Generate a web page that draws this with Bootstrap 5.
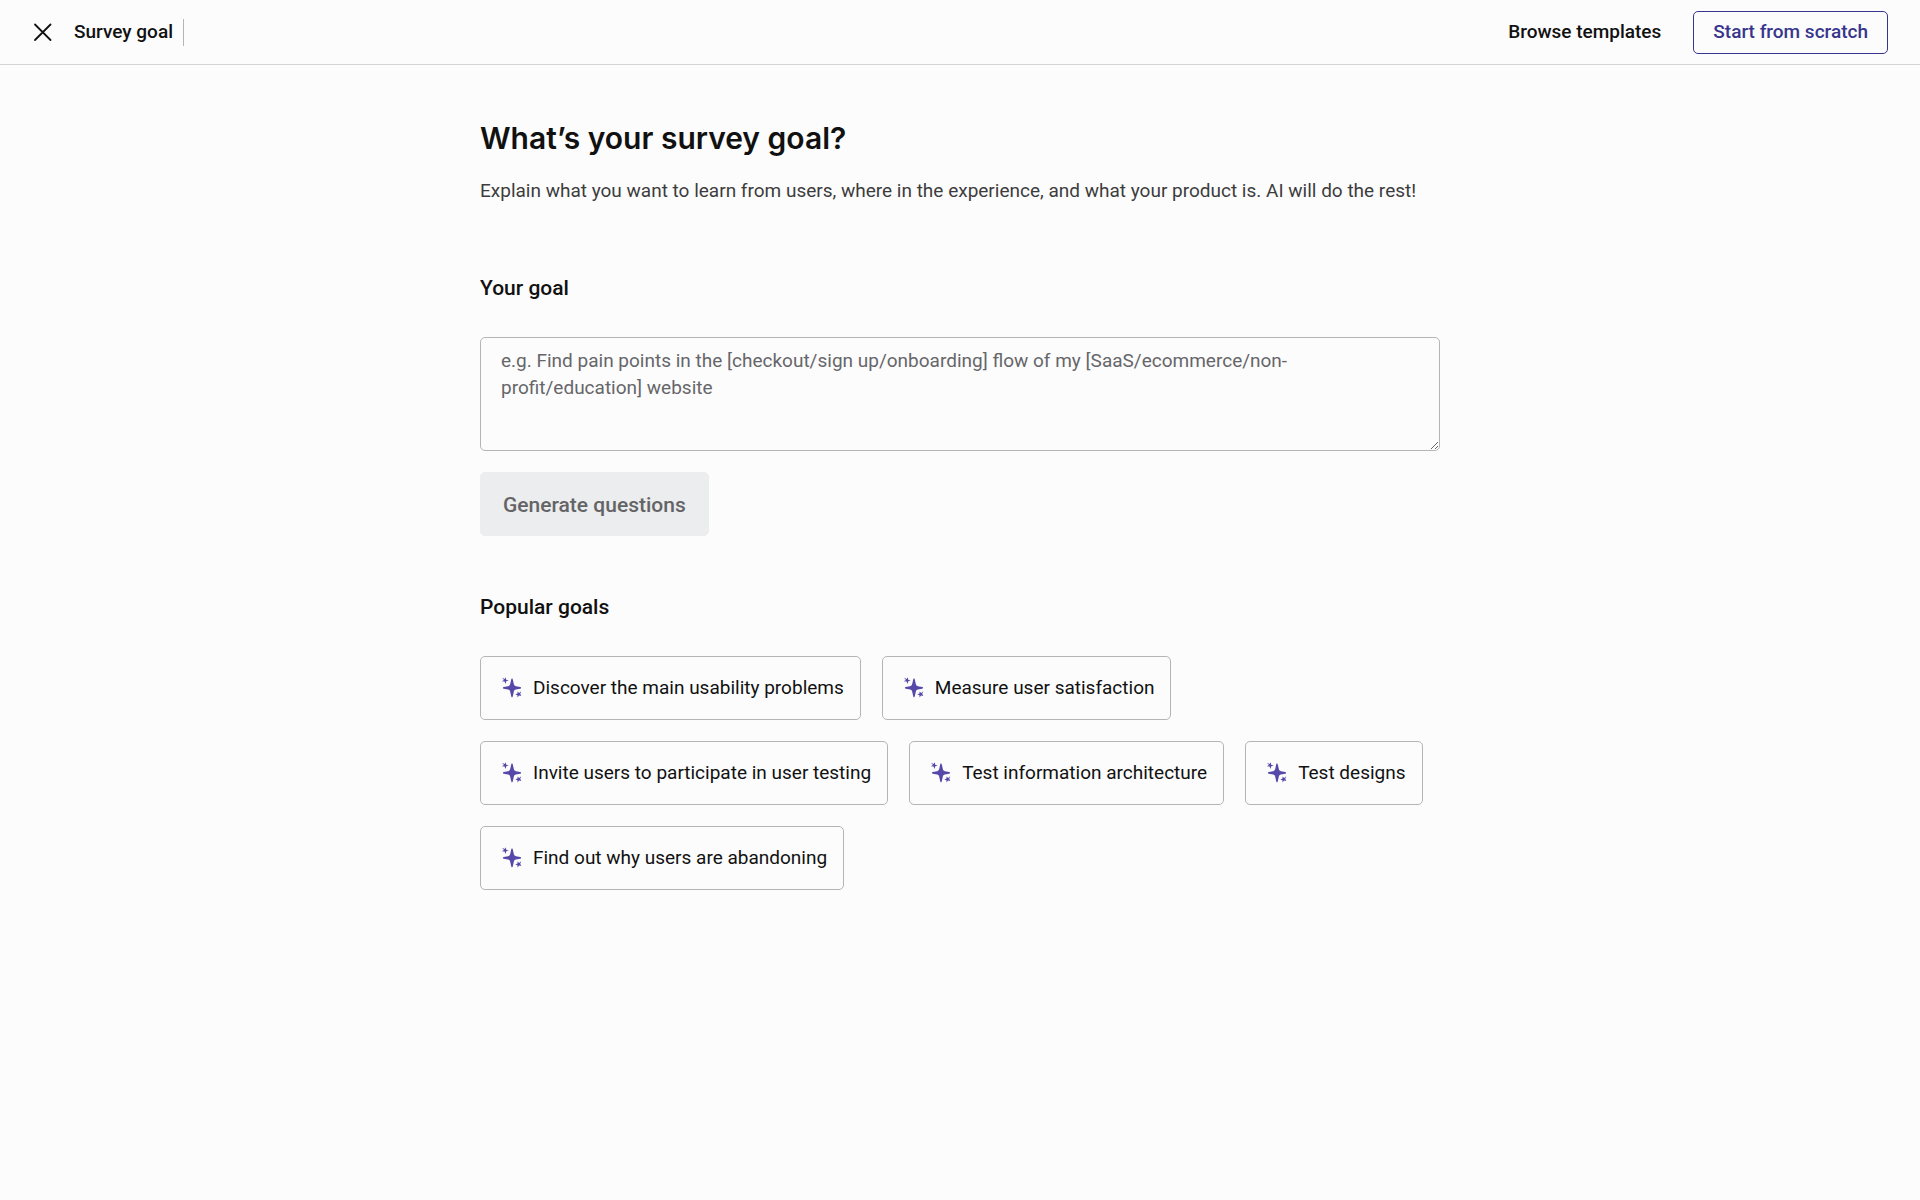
<!DOCTYPE html>
<html lang="en">
<head>
<meta charset="utf-8">
<meta name="viewport" content="width=device-width, initial-scale=1">
<title>Survey goal</title>
<link href="https://cdn.jsdelivr.net/npm/bootstrap@5.3.0/dist/css/bootstrap.min.css" rel="stylesheet">
<style>
  body { background: #fcfcfc; color: #111; font-family: Roboto, "Liberation Sans", sans-serif; font-size: 19px; line-height: 27px; }
  .topbar { height: 65px; padding: 0 32px; border-bottom: 1px solid #d5d5d8; }
  .btn { --bs-btn-font-size: 19px; --bs-btn-line-height: 27px; --bs-btn-border-radius: 5px; }
  .close-link { width: 21px; height: 21px; margin-right: 21px; }
  .close-link svg { display: block; }
  .bar-title, .browse-link { font-size: 19px; line-height: 25px; font-weight: 500; padding-bottom: 2px; }
  .bar-title { padding-right: 10px; border-right: 1px solid #b5b5b8; }
  .browse-link { color: #111; }
  .btn-scratch { --bs-btn-color: #37358c; --bs-btn-border-color: #37358c; --bs-btn-hover-color: #fff; --bs-btn-hover-bg: #37358c; padding: 6px 19px 8px; font-weight: 500; }
  .goal-main { max-width: 960px; padding-top: 51px; }
  .page-heading { font-family: Inter, "Liberation Sans", sans-serif; font-size: 30px; line-height: 45px; font-weight: 600; }
  .intro { color: #3c3c3e; }
  .section-title { font-size: 21px; line-height: 36px; font-weight: 500; margin-bottom: 31px; }
  .goal-form { padding-top: 18px; margin-bottom: 53px; }
  .goal-input.form-control { height: 114px; padding: 9px 20px; font-size: 19px; line-height: 27px; background: #fcfcfc; border: 1px solid #b5b5b8; border-radius: 5px; margin-bottom: 21px; }
  .goal-input::placeholder { color: #66666a; }
  .btn-generate { --bs-btn-font-size: 21px; --bs-btn-line-height: 32px; --bs-btn-disabled-bg: #ecedee; --bs-btn-disabled-color: #646466; --bs-btn-disabled-border-color: #ecedee; --bs-btn-disabled-opacity: 1; padding: 16px 22px 14px; font-weight: 500; }
  .chips { gap: 21px; }
  .btn-goal { --bs-btn-color: #111; --bs-btn-border-color: #b5b5b8; --bs-btn-hover-border-color: #5548a8; padding: 17px 16px 18px 20px; gap: 11px; }
</style>
<script src="https://cdn.jsdelivr.net/npm/bootstrap@5.3.0/dist/js/bootstrap.bundle.min.js"></script>
</head>
<body>
<svg class="d-none" xmlns="http://www.w3.org/2000/svg">
  <symbol id="sparkle" viewBox="0 0 21 21">
    <g fill="#5548a8">
      <path d="M11 1.400c.5 0 .7.5.8 1.100l1 4.600c.3 1.200.9 1.800 2.100 2.100l4.300.9c1.200.3 1.200 1.300 0 1.600l-4.300.9c-1.200.3-1.800.9-2.100 2.100l-1 4.600c-.3 1.500-1.300 1.500-1.600 0l-1-4.600c-.3-1.200-.9-1.800-2.100-2.100l-4.300-.9c-1.200-.3-1.200-1.300 0-1.600l4.300-.9c1.200-.3 1.800-.9 2.100-2.100l1-4.600c.1-.6.3-1.100.8-1.100z"/>
      <path d="M4.900.3 5.100 2.700 7.700 3.200 5.300 4.200 4.500 6.900 3.600 4.600.8 4.200 3 3.100 1 .8 3.700 2z"/>
      <path d="M20.300 14.200 19.200 16.800 20.300 19.100 18.100 18.400 16.500 20.500 16.500 18.200 14.300 17.400 16.500 16.600 16.600 14.600 18.100 15.900z"/>
    </g>
  </symbol>
</svg>
<header class="topbar d-flex align-items-center justify-content-between">
  <div class="d-flex align-items-center">
    <a class="close-link" href="#" aria-label="Close">
      <svg width="21" height="21" viewBox="0 0 21 21" fill="none" stroke="#111" stroke-width="1.800" stroke-linecap="round"><path d="M3 2.500l15.500 15.500M18.500 2.500L3 18"/></svg>
    </a>
    <h2 class="bar-title mb-0">Survey goal</h2>
  </div>
  <nav class="d-flex align-items-center gap-3" aria-label="Survey start options">
    <a class="browse-link text-decoration-none me-3" href="#">Browse templates</a>
    <button class="btn btn-scratch" type="button">Start from scratch</button>
  </nav>
</header>
<main class="goal-main container-fluid px-0">
  <h1 class="page-heading mb-3">What’s your survey goal?</h1>
  <p class="intro mb-5">Explain what you want to learn from users, where in the experience, and what your product is. AI will do the rest!</p>
  <form class="goal-form">
    <label class="section-title d-block" for="goal">Your goal</label>
    <textarea class="goal-input form-control" id="goal" placeholder="e.g. Find pain points in the [checkout/sign up/onboarding] flow of my [SaaS/ecommerce/non-profit/education] website"></textarea>
    <button class="btn btn-generate" type="submit" disabled>Generate questions</button>
  </form>
  <section aria-labelledby="popular">
    <h2 class="section-title" id="popular">Popular goals</h2>
    <div class="chips d-flex flex-wrap">
      <button class="btn btn-goal d-flex align-items-center" type="button"><svg width="21" height="21" aria-hidden="true"><use href="#sparkle"/></svg>Discover the main usability problems</button>
      <button class="btn btn-goal d-flex align-items-center" type="button"><svg width="21" height="21" aria-hidden="true"><use href="#sparkle"/></svg>Measure user satisfaction</button>
      <button class="btn btn-goal d-flex align-items-center" type="button"><svg width="21" height="21" aria-hidden="true"><use href="#sparkle"/></svg>Invite users to participate in user testing</button>
      <button class="btn btn-goal d-flex align-items-center" type="button"><svg width="21" height="21" aria-hidden="true"><use href="#sparkle"/></svg>Test information architecture</button>
      <button class="btn btn-goal d-flex align-items-center" type="button"><svg width="21" height="21" aria-hidden="true"><use href="#sparkle"/></svg>Test designs</button>
      <button class="btn btn-goal d-flex align-items-center" type="button"><svg width="21" height="21" aria-hidden="true"><use href="#sparkle"/></svg>Find out why users are abandoning</button>
    </div>
  </section>
</main>
</body>
</html>
